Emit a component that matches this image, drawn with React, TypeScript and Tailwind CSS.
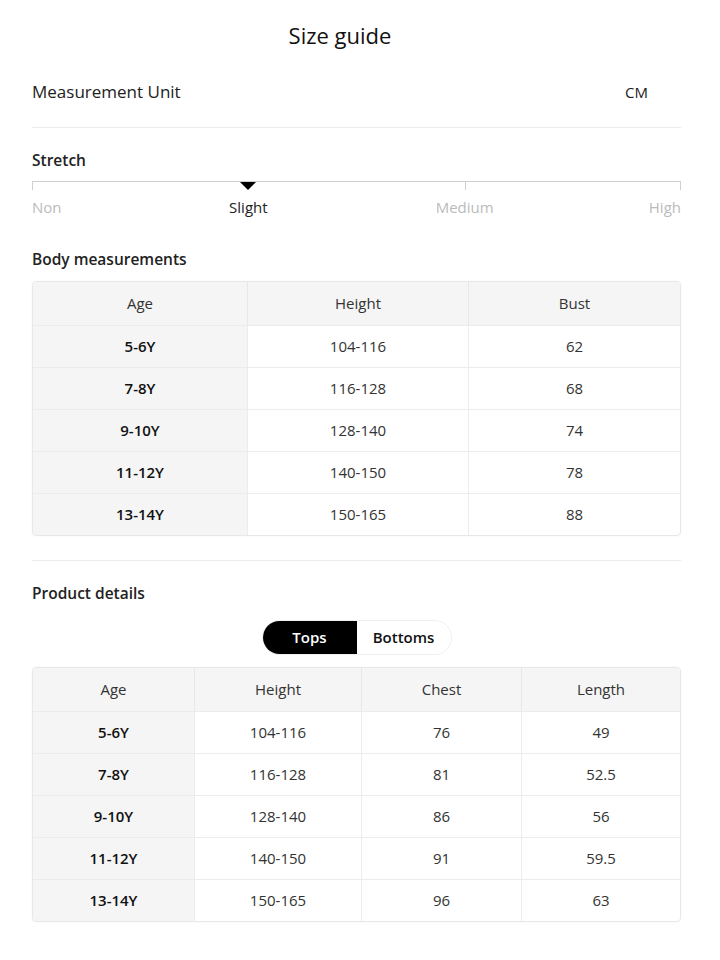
const body = [
  ["5-6Y", "104-116", "62"],
  ["7-8Y", "116-128", "68"],
  ["9-10Y", "128-140", "74"],
  ["11-12Y", "140-150", "78"],
  ["13-14Y", "150-165", "88"],
];

const product = [
  ["5-6Y", "104-116", "76", "49"],
  ["7-8Y", "116-128", "81", "52.5"],
  ["9-10Y", "128-140", "86", "56"],
  ["11-12Y", "140-150", "91", "59.5"],
  ["13-14Y", "150-165", "96", "63"],
];

function SizeTable({ head, rows, cols }: { head: string[]; rows: string[][]; cols: string }) {
  return (
    <div className="border border-[#e8e8e8] rounded-[4px] overflow-hidden shadow-[0_0_2px_rgba(0,0,0,0.06)]">
      <div className={`grid ${cols} bg-[#f5f5f5] h-[43px]`}>
        {head.map((h, i) => (
          <div
            key={h}
            className={`flex items-center justify-center text-[15px] text-[#333] ${i > 0 ? "border-l border-[#e8e8e8]" : ""}`}
          >
            {h}
          </div>
        ))}
      </div>
      {rows.map((r) => (
        <div key={r[0]} className={`grid ${cols} h-[42px] border-t border-[#ececec]`}>
          {r.map((c, i) => (
            <div
              key={i}
              className={
                i === 0
                  ? "flex items-center justify-center bg-[#f5f5f5] text-[15px] font-semibold text-[#111]"
                  : "flex items-center justify-center border-l border-[#ececec] text-[15px] text-[#333]"
              }
            >
              {c}
            </div>
          ))}
        </div>
      ))}
    </div>
  );
}

export default function App() {
  return (
    <div className="w-[720px] min-h-[960px] bg-white pl-8 pr-[39px] font-['Open_Sans',sans-serif] text-[#222]">
      <h1 className="pt-[20px] mr-[33px] text-center text-[22px] font-medium leading-[30px] text-[#111]">Size guide</h1>

      <div className="mt-[27px] flex items-center justify-between h-[30px]">
        <span className="text-[17px] font-medium">Measurement Unit</span>
        <span className="mr-[33px] text-[15px] font-medium">CM</span>
      </div>
      <div className="mt-[20px] border-t border-[#ececec]" />

      <div className="mt-[20px] text-[15.5px] font-semibold leading-[24px]">Stretch</div>

      <div className="mt-[9px] grid grid-cols-6 h-[8px] border-t border-[#cfcfcf]">
        <div className="border-l border-[#cfcfcf]" />
        <div className="col-span-2 flex justify-center">
          <div className="w-0 h-0 border-l-[8px] border-r-[8px] border-t-[8px] border-l-transparent border-r-transparent border-t-black" />
        </div>
        <div />
        <div className="border-l border-[#cfcfcf]" />
        <div className="border-r border-[#cfcfcf]" />
      </div>
      <div className="mt-[7px] grid grid-cols-6 text-[15px] leading-[22px]">
        <div className="text-[#bbb]">Non</div>
        <div className="col-span-2 text-center text-[#222]">Slight</div>
        <div className="col-span-2 text-center text-[#bbb]">Medium</div>
        <div className="text-right text-[#bbb]">High</div>
      </div>

      <div className="mt-[29px] text-[15.5px] font-semibold leading-[24px]">Body measurements</div>
      <div className="mt-[10px]">
        <SizeTable head={["Age", "Height", "Bust"]} rows={body} cols="grid-cols-[214px_221px_1fr]" />
      </div>

      <div className="mt-[24px] border-t border-[#ececec]" />

      <div className="mt-[20px] text-[15.5px] font-semibold leading-[24px]">Product details</div>
      <div className="mt-[15px] flex justify-center">
        <div className="flex h-[35px] rounded-full border border-[#eee] overflow-hidden">
          <div className="w-[94px] flex items-center justify-center bg-black text-white text-[15px] font-semibold">Tops</div>
          <div className="w-[94px] flex items-center justify-center bg-white text-[#111] text-[15px] font-semibold">Bottoms</div>
        </div>
      </div>
      <div className="mt-[12px]">
        <SizeTable
          head={["Age", "Height", "Chest", "Length"]}
          rows={product}
          cols="grid-cols-[161px_167px_160px_1fr]"
        />
      </div>
    </div>
  );
}
